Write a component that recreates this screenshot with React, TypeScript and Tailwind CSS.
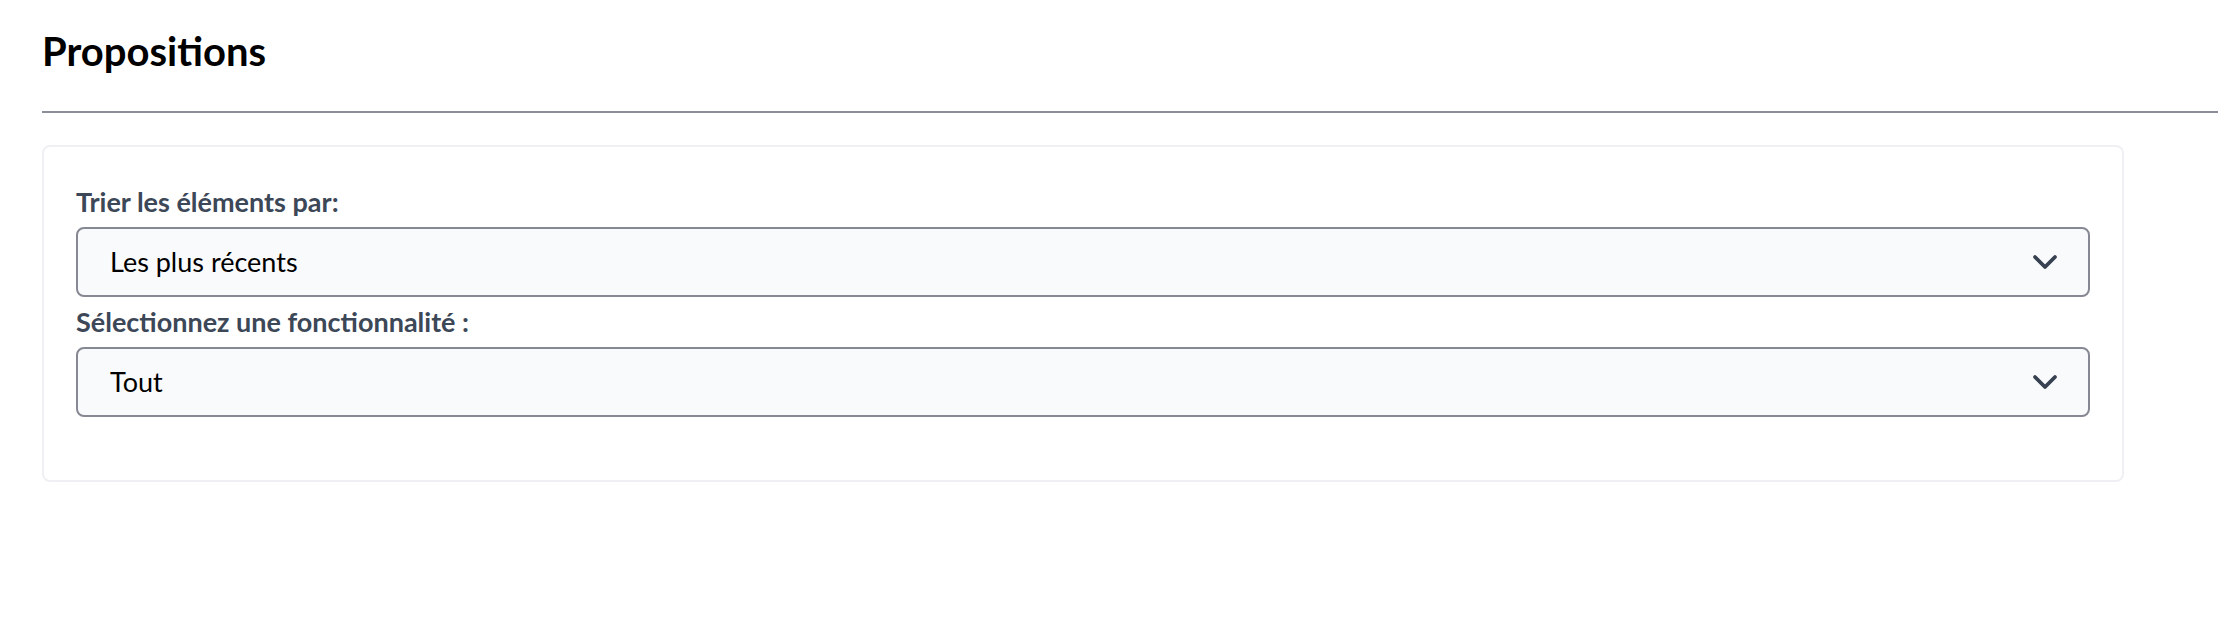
import { ChevronDown } from 'lucide-react';

const selects = [
  { label: 'Trier les éléments par:', value: 'Les plus récents' },
  { label: 'Sélectionnez une fonctionnalité :', value: 'Tout' },
];

export default function App() {
  return (
    <div className="min-h-screen bg-white pl-[42px] pt-[27px] font-['Lato',sans-serif]">
      <h1 className="text-[40px] leading-[48px] font-bold text-black">Propositions</h1>
      <div className="mt-[36px] h-[2px] bg-[#8b8d98]" />

      <div className="mt-[32px] w-[2082px] rounded-[8px] border-2 border-[#f0f0f4] bg-white px-[32px] pt-[38px] pb-[63px]">
        <div className="flex flex-col gap-[8px]">
          {selects.map((s) => (
            <div key={s.label}>
              <label className="block text-[27px] leading-[34px] font-bold text-[#3c4757]">{s.label}</label>
              <div className="mt-[8px] flex h-[70px] items-center rounded-[8px] border-2 border-[#868894] bg-[#f9fafb] pl-[32px] pr-[23px]">
                <span className="flex-1 text-[27px] text-black">{s.value}</span>
                <ChevronDown className="h-[40px] w-[40px] text-[#374151]" strokeWidth={2.3} />
              </div>
            </div>
          ))}
        </div>
      </div>
    </div>
  );
}
